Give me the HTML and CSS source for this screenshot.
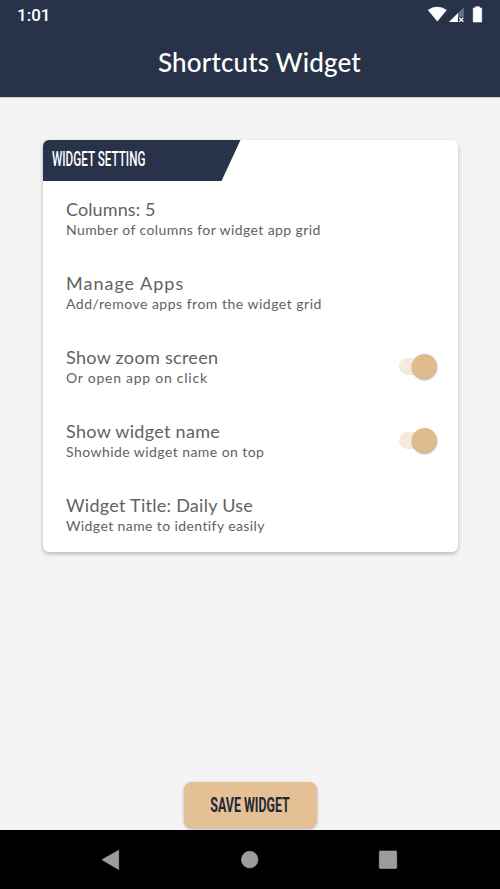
FILE: index.html
```
<!DOCTYPE html>
<html lang="en">
<head>
<meta charset="utf-8">
<title>Shortcuts Widget</title>
<link rel="stylesheet" href="styles.css">
</head>
<body>
<div class="screen">
  <header class="header">
    <div class="status">
      <span class="clock">1:01</span>
      <svg class="status-icons" width="58" height="20" viewBox="0 0 58 20">
        <path d="M0.8 5Q10 -1.400 19.800 5L10.300 16.500Z" fill="#fff"/>
        <path d="M36.800 2.500V17H22Z" fill="#69748a"/>
        <path d="M31 8V17H22Z" fill="#fff"/>
        <path d="M31 11.800H37.500V17H31Z" fill="#28334a"/>
        <path d="M32.300 12.800L36.300 16.800M36.300 12.800L32.300 16.800" stroke="#fff" stroke-width="1.300"/>
        <path d="M46.200 3H48.500V1.700H52.500V3H54.700V17H46.200Z" stroke="#fff" stroke-linejoin="round" stroke-width=".6" fill="#fff"/>
      </svg>
    </div>
    <h1 class="title">Shortcuts Widget</h1>
  </header>
  <main class="content">
    <section class="card">
      <div class="card-tab"><span class="tab-label">WIDGET SETTING</span></div>
      <div class="row"><div><div class="name n1">Columns: 5</div><div class="desc d1">Number of columns for widget app grid</div></div></div>
      <div class="row"><div><div class="name n2">Manage Apps</div><div class="desc d2">Add/remove apps from the widget grid</div></div></div>
      <div class="row"><div><div class="name n3">Show zoom screen</div><div class="desc d3">Or open app on click</div></div><span class="switch"></span></div>
      <div class="row"><div><div class="name n4">Show widget name</div><div class="desc d4">Showhide widget name on top</div></div><span class="switch"></span></div>
      <div class="row"><div><div class="name n5">Widget Title: Daily Use</div><div class="desc d5">Widget name to identify easily</div></div></div>
    </section>
    <button class="save"><span class="save-label">SAVE WIDGET</span></button>
  </main>
  <nav class="navbar">
    <svg width="500" height="59" viewBox="0 0 500 59">
      <g fill="#9c9c9c" stroke="#aaa" stroke-width=".6" stroke-linejoin="round">
        <path d="M102 29.700L118.700 20.200V39.500Z"/>
        <circle cx="249.700" cy="29.600" r="8.300"/>
        <rect x="379.300" y="21" width="17.400" height="17.400" rx=".8"/>
      </g>
    </svg>
  </nav>
</div>
</body>
</html>
```
FILE: styles.css
```
* { box-sizing: border-box; }
body { margin: 0; }
.screen {
  width: 500px;
  height: 889px;
  display: flex;
  flex-direction: column;
  background: #f4f4f4;
  font-family: Lato, sans-serif;
  overflow: hidden;
}
.header {
  height: 97px;
  background: #28334a;
  color: #fff;
  box-shadow: 0 1px 1px rgba(0, 0, 0, .15);
}
.status {
  height: 30px;
  padding: 5px 15px 0 17px;
  display: flex;
  justify-content: space-between;
}
.clock {
  font: 500 17px/21px Roboto, sans-serif;
}
.title {
  margin: 14px 0 0 158px;
  font-size: 26px;
  line-height: 36px;
  font-weight: 500;
  letter-spacing: .15px;
  white-space: nowrap;
}
.content {
  height: 733px;
  padding-top: 43px;
  display: flex;
  flex-direction: column;
  align-items: center;
}
.card {
  width: 415px;
  height: 412px;
  background: #fff;
  border-radius: 6px;
  box-shadow: 0 2px 4px rgba(0, 0, 0, .26);
}
.card-tab {
  width: 198px;
  height: 41px;
  padding: 5px 0 0 9px;
  background: #28334a;
  color: #fff;
  border-top-left-radius: 6px;
  clip-path: polygon(0 0, 100% 0, 179px 100%, 0 100%);
}
.tab-label, .save-label {
  display: inline-block;
  font: 500 20px/28px Roboto, sans-serif;
  white-space: nowrap;
}
.tab-label {
  transform: scaleX(.585);
  transform-origin: left;
}
.row {
  height: 74px;
  padding: 17px 21px 0 23.5px;
  display: flex;
  justify-content: space-between;
  color: #626262;
  white-space: nowrap;
}
.name { font-size: 18px; line-height: 23px; }
.desc { font-size: 14px; line-height: 17px; }
.n1 { letter-spacing: .1px; }
.n2 { letter-spacing: 1px; }
.n3, .n4 { letter-spacing: .3px; }
.n5 { letter-spacing: .27px; }
.d1 { letter-spacing: .4px; }
.d2 { letter-spacing: .5px; }
.d3 { letter-spacing: .75px; }
.d4 { letter-spacing: .44px; }
.d5 { letter-spacing: .4px; }
.switch {
  width: 38px;
  height: 17px;
  margin-top: 12px;
  border-radius: 9px;
  background: #f6eadc;
  display: flex;
  justify-content: flex-end;
  align-items: center;
}
.switch::after {
  content: "";
  width: 25px;
  height: 25px;
  flex: none;
  border-radius: 50%;
  background: #e0bb8b;
  box-shadow: 0 1px 2px rgba(0, 0, 0, .35);
}
.save {
  width: 133px;
  height: 46px;
  margin-top: 230px;
  padding: 0;
  border: 0;
  border-radius: 8px;
  background: #e4c094;
  color: #1f2838;
  box-shadow: 0 1px 3px rgba(0, 0, 0, .3);
  display: flex;
  justify-content: center;
  align-items: center;
}
.save-label {
  font-weight: 700;
  transform: scaleX(.62);
}
.navbar {
  height: 59px;
  background: #000;
}
.navbar svg { display: block; }
```
